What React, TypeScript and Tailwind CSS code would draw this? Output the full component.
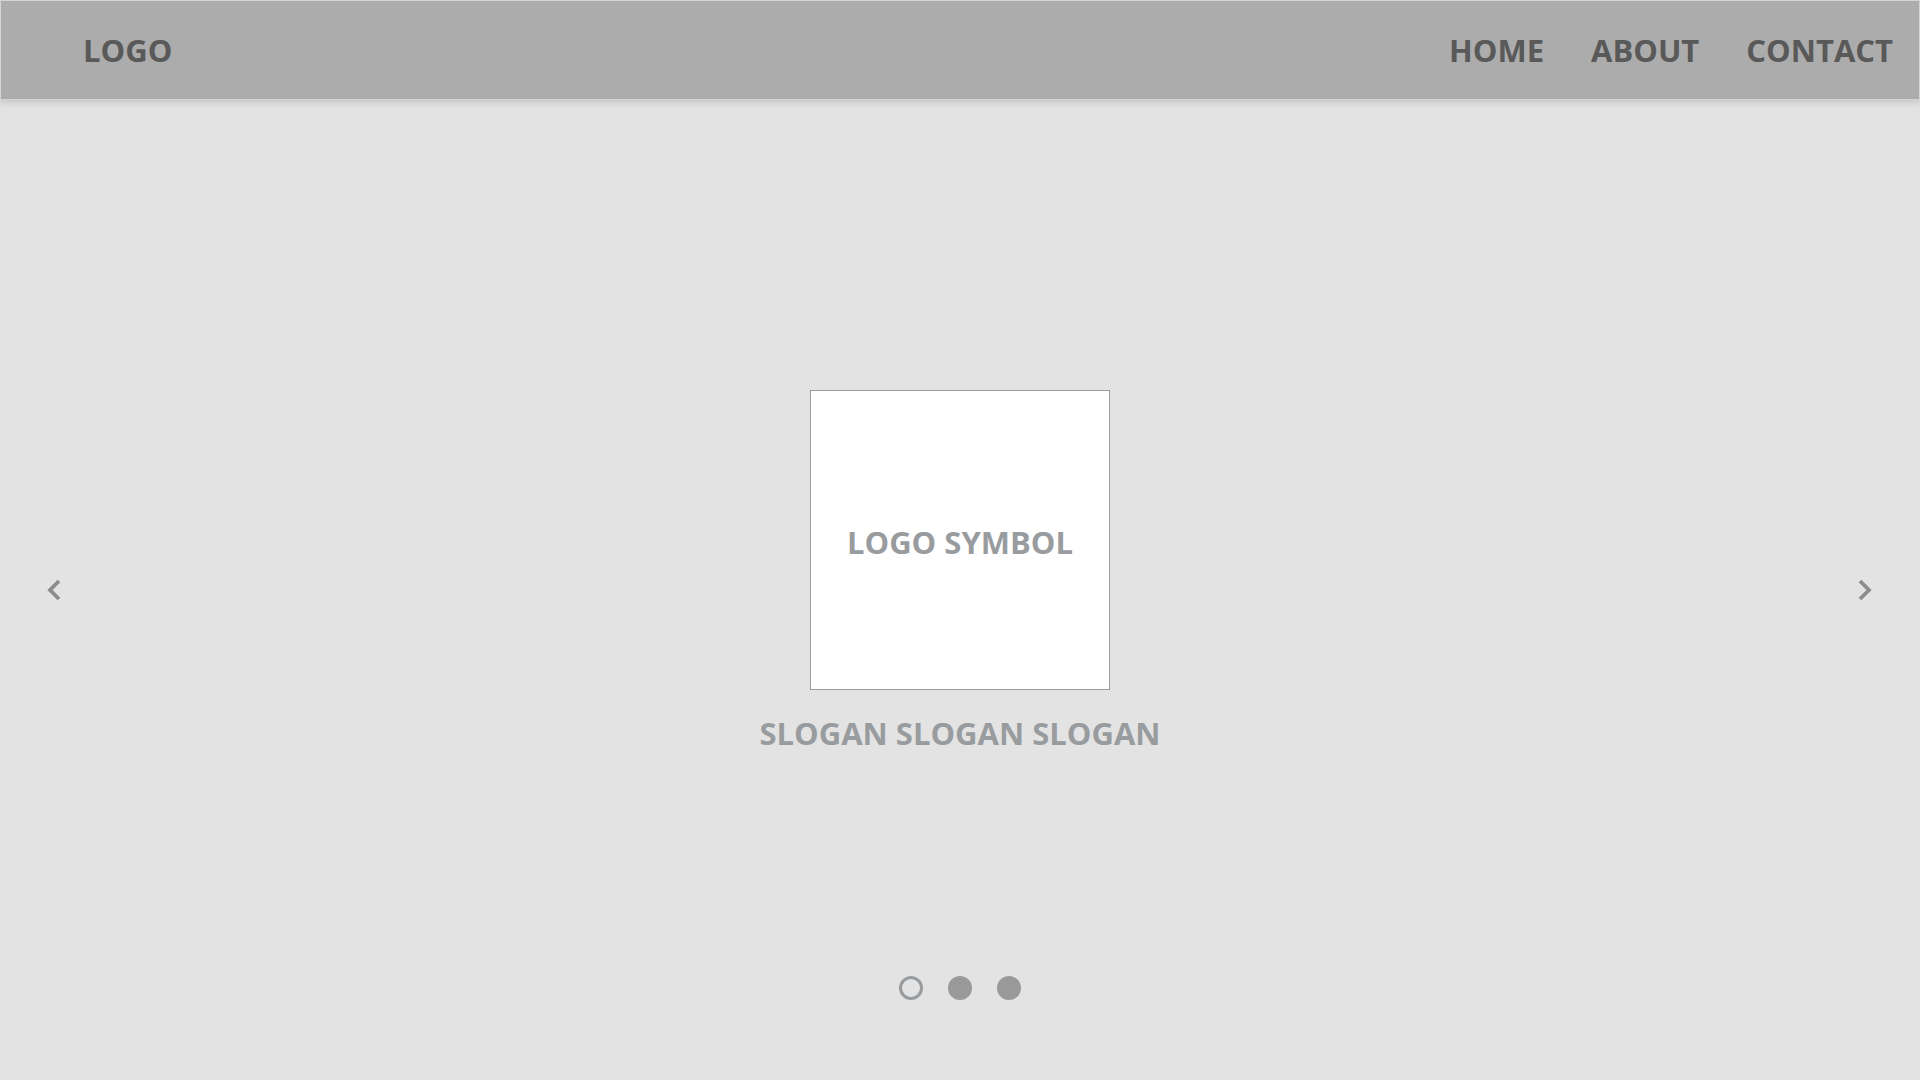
export default function App() {
  const nav = ["HOME", "ABOUT", "CONTACT"];

  return (
    <div className="h-screen w-full bg-[#e3e3e3] flex flex-col font-['Open_Sans',sans-serif] overflow-hidden">
      <header className="h-[100px] shrink-0 border border-[#d4d4d4] bg-[#acacac] shadow-[0_3px_6px_rgba(0,0,0,0.12)] flex items-center justify-between pl-[82px] pr-[26px] relative z-10">
        <span className="text-[31px] font-bold text-[#595959]">LOGO</span>
        <nav className="flex items-center gap-[47px]">
          {nav.map((item) => (
            <a key={item} className="text-[31px] font-bold text-[#595959]">
              {item}
            </a>
          ))}
        </nav>
      </header>

      <main className="relative flex-1 flex flex-col items-center pt-[290px] pb-[80px]">
        <button className="absolute left-[45px] top-1/2 -translate-y-1/2">
          <svg width="20" height="24" viewBox="0 0 20 24">
            <polyline points="14,3 5,12 14,21" fill="none" stroke="#8c8c8c" strokeWidth="3.8" />
          </svg>
        </button>
        <button className="absolute right-[46px] top-1/2 -translate-y-1/2">
          <svg width="20" height="24" viewBox="0 0 20 24">
            <polyline points="6,3 15,12 6,21" fill="none" stroke="#8c8c8c" strokeWidth="3.8" />
          </svg>
        </button>

        <div className="w-[300px] h-[300px] bg-white border border-[#9d9d9d] flex items-center justify-center">
          <span className="text-[31px] font-bold text-[#999c9f] mt-[4px]">LOGO SYMBOL</span>
        </div>
        <p className="mt-[20px] text-[31px] font-bold text-[#999c9f]">
          SLOGAN SLOGAN SLOGAN
        </p>

        <div className="mt-auto flex items-center gap-[25px]">
          <span className="w-[24px] h-[24px] rounded-full border-[3px] border-[#999c9f]" />
          <span className="w-[24px] h-[24px] rounded-full bg-[#999999]" />
          <span className="w-[24px] h-[24px] rounded-full bg-[#999999]" />
        </div>
      </main>
    </div>
  );
}
